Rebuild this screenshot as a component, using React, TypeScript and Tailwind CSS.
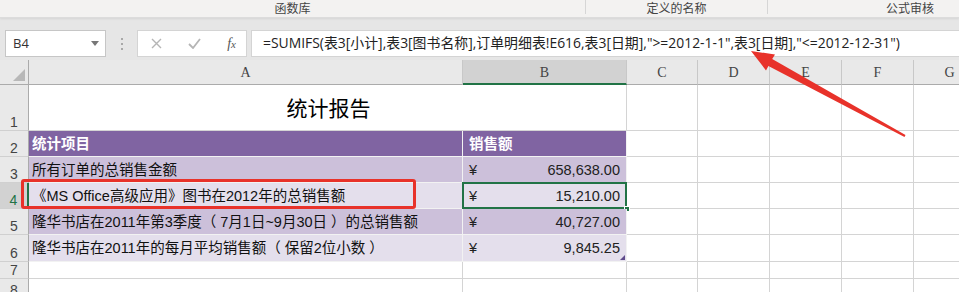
import React from "react";

const CELL_FONT = "font-['Liberation_Sans','Noto_Sans_CJK_SC',sans-serif]";

type Row = { n: number; h: string; a?: string; b?: string; band?: "head" | "dark" | "light" };

const rows: Row[] = [
  { n: 2, h: "h-[26px]", a: "统计项目", b: "销售额", band: "head" },
  { n: 3, h: "h-[26px]", a: "所有订单的总销售金额", b: "658,638.00", band: "dark" },
  { n: 4, h: "h-[26px]", a: "《MS Office高级应用》图书在2012年的总销售额", b: "15,210.00", band: "light" },
  { n: 5, h: "h-[26px]", a: "隆华书店在2011年第3季度（ 7月1日~9月30日 ）的总销售额", b: "40,727.00", band: "dark" },
  { n: 6, h: "h-[27px]", a: "隆华书店在2011年的每月平均销售额（ 保留2位小数 ）", b: "9,845.25", band: "light" },
];

function RowHead({ n, active }: { n: number; active?: boolean }) {
  return (
    <div
      className={`w-[29px] shrink-0 flex items-end justify-center pb-[1px] border-b border-[#d0d0d0] text-[14px] leading-none font-['Liberation_Sans',sans-serif] ${
        active
          ? "bg-[#d2d2d2] text-[#217346] border-r-2 border-r-[#217346]"
          : "bg-[#e9e9e9] text-[#444] border-r border-r-[#ababab]"
      }`}
    >
      {n}
    </div>
  );
}

function EmptyCols() {
  return (
    <>
      <div className="w-[71px] shrink-0 border-r border-b border-[#d4d4d4]" />
      <div className="w-[72px] shrink-0 border-r border-b border-[#d4d4d4]" />
      <div className="w-[72px] shrink-0 border-r border-b border-[#d4d4d4]" />
      <div className="w-[72px] shrink-0 border-r border-b border-[#d4d4d4]" />
      <div className="w-[72px] shrink-0 border-r border-b border-[#d4d4d4]" />
    </>
  );
}

function Ribbon() {
  return (
    <div className="h-[18px] flex bg-[#f3f2f1] border-b border-[#dcdcdc] shadow-[0_1px_2px_rgba(0,0,0,0.08)] text-[12px] text-[#444] leading-[16px] font-['Noto_Sans_CJK_SC',sans-serif]">
      <div className="w-[586px] shrink-0 flex justify-center border-r border-[#d6d6d6] mb-[3px]">函数库</div>
      <div className="w-[182px] shrink-0 flex justify-center border-r border-[#d6d6d6] mb-[3px]">定义的名称</div>
      <div className="w-[284px] shrink-0 flex justify-center">公式审核</div>
    </div>
  );
}

function FormulaBar() {
  return (
    <div className="flex items-stretch h-[27px] mt-[12px] pl-[5px]">
      <div className="w-[101px] bg-white border border-[#c6c6c6] flex items-center justify-between pl-[7px] pr-[6px] text-[13px] text-[#333] font-['Open_Sans',sans-serif]">
        <span>B4</span>
        <svg width="8" height="5" viewBox="0 0 8 5">
          <path d="M0 0h8L4 5z" fill="#777" />
        </svg>
      </div>
      <div className="w-[31px] flex flex-col items-center justify-center gap-[3px]">
        <span className="w-[2px] h-[2px] bg-[#a8a8a8]" />
        <span className="w-[2px] h-[2px] bg-[#a8a8a8]" />
        <span className="w-[2px] h-[2px] bg-[#a8a8a8]" />
      </div>
      <div className="w-[110px] bg-white border border-[#d4d4d4] flex items-center justify-between pl-[13px] pr-[10px]">
        <svg width="11" height="11" viewBox="0 0 11 11">
          <path d="M1 1l9 9M10 1l-9 9" stroke="#b5b5b5" strokeWidth="1.4" />
        </svg>
        <svg width="13" height="11" viewBox="0 0 13 11">
          <path d="M1 6l4 4 7-9" stroke="#b5b5b5" strokeWidth="1.8" fill="none" />
        </svg>
        <span className="text-[14px] italic text-[#555] font-['Liberation_Serif',serif]">
          f<span className="text-[11px]">x</span>
        </span>
      </div>
      <div className="ml-[4px] flex-1 bg-white border border-[#d4d4d4] border-r-0 flex items-center pl-[11px] text-[13.9px] text-[#222] whitespace-nowrap overflow-hidden font-['Open_Sans','Noto_Sans_CJK_SC',sans-serif]">
        =SUMIFS(表3[小计],表3[图书名称],订单明细表!E616,表3[日期],"&gt;=2012-1-1",表3[日期],"&lt;=2012-12-31")
      </div>
    </div>
  );
}

function ColHeaders() {
  const letters = ["C", "D", "E", "F", "G"];
  const widths = ["w-[71px]", "w-[72px]", "w-[72px]", "w-[72px]", "w-[72px]"];
  return (
    <div className="flex h-[25px] mt-[3px] bg-[#e9e9e9] text-[14px] text-[#444] leading-none font-['Liberation_Serif',serif]">
      <div className="w-[29px] shrink-0 border-b border-r border-[#ababab] flex items-end justify-end pr-[3px] pb-[3px]">
        <svg width="12" height="12" viewBox="0 0 12 12">
          <path d="M12 0V12H0z" fill="#b8b8b8" />
        </svg>
      </div>
      <div className="w-[434px] shrink-0 border-b border-r border-[#ababab] border-r-[#c8c8c8] flex items-end justify-center pb-[4px]">A</div>
      <div className="w-[164px] shrink-0 bg-[#d2d2d2] border-b-2 border-[#217346] border-r border-r-[#c8c8c8] flex items-end justify-center pb-[3px]">B</div>
      {letters.map((l, i) => (
        <div key={l} className={`${widths[i]} shrink-0 border-b border-r border-[#ababab] border-r-[#c8c8c8] flex items-end justify-center pb-[4px]`}>
          {l}
        </div>
      ))}
    </div>
  );
}

export default function App() {
  return (
    <div className="relative w-[959px] h-[292px] overflow-hidden bg-[#e6e6e6]">
      <Ribbon />
      <FormulaBar />
      <ColHeaders />

      <div className={`bg-white ${CELL_FONT}`}>
        {/* row 1 – merged title */}
        <div className="flex h-[46px]">
          <RowHead n={1} />
          <div className="w-[598px] shrink-0 border-r border-b border-[#d4d4d4] flex items-center justify-center pl-[2px] pt-[1px] text-[21px] text-black font-['Noto_Sans_CJK_SC',sans-serif]">
            统计报告
          </div>
          <EmptyCols />
        </div>

        {rows.map((r) => {
          const bg =
            r.band === "head" ? "bg-[#8064a2]" : r.band === "dark" ? "bg-[#ccc0da]" : "bg-[#e4dfec]";
          const txt = r.band === "head" ? "text-white font-bold" : "text-[#111]";
          return (
            <div key={r.n} className={`flex ${r.h}`}>
              <RowHead n={r.n} active={r.n === 4} />
              <div className={`w-[434px] shrink-0 ${bg} ${txt} border-r border-b border-[#f2f2f2] flex items-center pl-[3px] pt-[2px] text-[14.5px] whitespace-pre`}>
                {r.a}
              </div>
              <div className={`relative w-[164px] shrink-0 ${bg} ${txt} border-r border-b border-[#f2f2f2] flex items-center pl-[6px] pr-[6px] pt-[2px] text-[14.5px]`}>
                {r.band === "head" ? (
                  <span>{r.b}</span>
                ) : (
                  <>
                    <span className="text-[#222]">¥</span>
                    <span className="ml-auto text-[#222]">{r.b}</span>
                  </>
                )}
                {r.n === 4 && (
                  <>
                    <span className="absolute -left-px -top-px w-[165px] h-[27px] border-2 border-[#217346]" />
                    <span className="absolute -right-[4px] -bottom-[4px] w-[6px] h-[6px] bg-[#217346] border border-white" />
                  </>
                )}
                {r.n === 6 && (
                  <svg className="absolute right-[1px] bottom-[1px]" width="5" height="5" viewBox="0 0 5 5">
                    <path d="M5 0V5H0z" fill="#5f4b8b" />
                  </svg>
                )}
              </div>
              <EmptyCols />
            </div>
          );
        })}

        {[{ n: 7, h: "h-[17px]" }, { n: 8, h: "h-[20px]" }].map((r) => (
          <div key={r.n} className={`flex ${r.h}`}>
            <RowHead n={r.n} />
            <div className="w-[434px] shrink-0 border-r border-b border-[#d4d4d4]" />
            <div className="w-[164px] shrink-0 border-r border-b border-[#d4d4d4]" />
            <EmptyCols />
          </div>
        ))}
      </div>

      {/* red highlight box */}
      <div className="absolute left-[21px] top-[179px] w-[395px] h-[30px] rounded-[3px] border-[3px] border-[#e8322a]" />

      {/* red arrow */}
      <svg className="absolute left-0 top-0 pointer-events-none" width="959" height="292" viewBox="0 0 959 292">
        <polygon
          points="751,51 775,54.5 772.2,58.9 905.5,135.1 904.5,136.9 768.4,66 766,70.4"
          fill="#e8322a"
        />
      </svg>
    </div>
  );
}
